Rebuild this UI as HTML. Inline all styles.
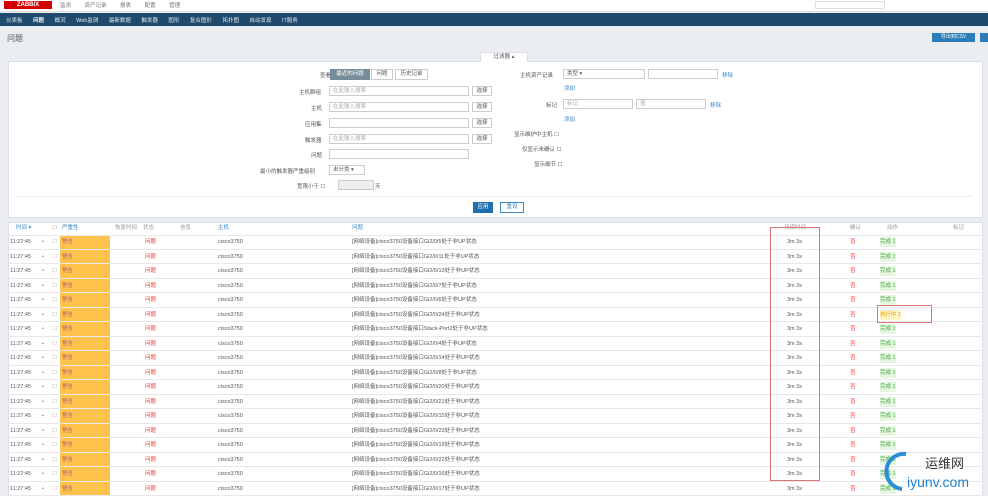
<!DOCTYPE html>
<html><head><meta charset="utf-8"><style>
*{margin:0;padding:0;box-sizing:border-box}
body{width:988px;height:496px;overflow:hidden;background:#ebeef0;font-family:"Liberation Sans","Noto Sans CJK SC",sans-serif;font-size:5.5px;color:#555;position:relative}
.a{position:absolute;white-space:nowrap}
.in{position:absolute;background:#fff;border:1px solid #ccc;height:10px;color:#aaa;padding-left:3px;line-height:8px}
.btn{position:absolute;background:#fff;border:1px solid #ccc;height:10px;text-align:center;line-height:8px;color:#555}
.row{position:absolute;left:8px;width:975px;height:14.5px;border-bottom:1px solid #e8e8e8}
.row span{position:absolute;top:0;line-height:14.5px;height:14.5px}
</style></head><body>
<div class="a" style="left:0;top:0;width:988px;height:12px;background:#fff;border-bottom:1px solid #ddd"></div>
<div class="a" style="left:4px;top:1px;width:48px;height:8px;background:#d40000;color:#fff;font-size:6px;font-weight:bold;text-align:center;line-height:8px">ZABBIX</div>
<div class="a" style="left:60px;top:1px;color:#777;word-spacing:12px">监测 资产记录 报表 配置 管理</div>
<div class="a" style="left:815px;top:1px;width:70px;height:8px;border:1px solid #ddd;background:#fff"></div>
<div class="a" style="left:0;top:13px;width:988px;height:13px;background:#1f4a6e"></div>
<div class="a" style="left:6px;top:16px;color:#dfe8ef;word-spacing:9px">仪表板 <b style="color:#fff">问题</b> 概况 Web监测 最新数据 触发器 图形 复合图形 拓扑图 自动发现 IT服务</div>
<div class="a" style="left:7px;top:33px;font-size:8px;color:#555">问题</div>
<div class="a" style="left:932px;top:33px;width:43px;height:9px;background:#2d7dbb;color:#fff;font-size:5px;text-align:center;line-height:9px">导出到CSV</div>
<div class="a" style="left:980px;top:33px;width:8px;height:9px;background:#2d7dbb"></div>
<div class="a" style="left:8px;top:61px;width:975px;height:157px;background:#fff;border:1px solid #dde"></div>
<div class="a" style="left:480px;top:52px;width:48px;height:10px;background:#fff;border:1px solid #dde;border-bottom:none;text-align:center;line-height:9px">过滤器 ▴</div>
<div class="a" style="left:320px;top:71px">查看</div>
<div class="a" style="left:330px;top:69px;width:40px;height:11px;background:#768d99;color:#fff;text-align:center;line-height:11px">最近的问题</div>
<div class="btn" style="left:371px;top:69px;width:22px;height:11px">问题</div>
<div class="btn" style="left:395px;top:69px;width:33px;height:11px">历史记录</div>
<div class="a" style="left:299px;top:88px">主机群组</div><div class="in" style="left:329px;top:86px;width:140px">在此输入搜索</div><div class="btn" style="left:472px;top:86px;width:20px">选择</div>
<div class="a" style="left:311px;top:104px">主机</div><div class="in" style="left:329px;top:102px;width:140px">在此输入搜索</div><div class="btn" style="left:472px;top:102px;width:20px">选择</div>
<div class="a" style="left:305px;top:120px">应用集</div><div class="in" style="left:329px;top:118px;width:140px"></div><div class="btn" style="left:472px;top:118px;width:20px">选择</div>
<div class="a" style="left:305px;top:136px">触发器</div><div class="in" style="left:329px;top:134px;width:140px">在此输入搜索</div><div class="btn" style="left:472px;top:134px;width:20px">选择</div>
<div class="a" style="left:311px;top:151px">问题</div><div class="in" style="left:329px;top:149px;width:140px"></div>
<div class="a" style="left:260px;top:167px">最小的触发器严重级别</div><div class="in" style="left:329px;top:165px;width:36px;color:#555">未分类 ▾</div>
<div class="a" style="left:297px;top:182px">宽限小于 ☐</div><div class="in" style="left:338px;top:180px;width:36px;background:#eee"></div><div class="a" style="left:375px;top:182px">天</div>
<div class="a" style="left:520px;top:71px">主机资产记录</div><div class="in" style="left:563px;top:69px;width:82px;color:#555">类型 ▾</div><div class="in" style="left:648px;top:69px;width:70px"></div><div class="a" style="left:722px;top:71px;color:#3b86c5">移除</div>
<div class="a" style="left:564px;top:84px;color:#3b86c5">添加</div>
<div class="a" style="left:546px;top:101px">标记</div><div class="in" style="left:563px;top:99px;width:70px">标记</div><div class="in" style="left:636px;top:99px;width:70px">值</div><div class="a" style="left:710px;top:101px;color:#3b86c5">移除</div>
<div class="a" style="left:564px;top:115px;color:#3b86c5">添加</div>
<div class="a" style="left:514px;top:130px">显示维护中主机 ☐</div>
<div class="a" style="left:522px;top:145px">仅显示未确认 ☐</div>
<div class="a" style="left:534px;top:160px">显示细节 ☐</div>
<div class="a" style="left:18px;top:196px;width:955px;border-top:1px solid #eee"></div>
<div class="a" style="left:473px;top:202px;width:20px;height:11px;background:#1f6eae;color:#fff;text-align:center;line-height:11px">应用</div>
<div class="btn" style="left:500px;top:202px;width:24px;height:11px;border-color:#3b86c5;color:#3b86c5">重设</div>
<div class="a" style="left:8px;top:222px;width:975px;height:274px;background:#fff;border:1px solid #dde"></div>
<div class="row" style="top:221px;color:#3b86c5">
<span style="left:8px">时间 ▾</span><span style="left:44px;color:#999">☐</span><span style="left:54px">严重性</span><span style="left:107px;color:#999">恢复时间</span><span style="left:135px;color:#999">状态</span><span style="left:172px;color:#999">信息</span><span style="left:210px">主机</span><span style="left:344px">问题</span><span style="left:776px;color:#999">持续时间</span><span style="left:842px;color:#999">确认</span><span style="left:879px;color:#999">动作</span><span style="left:945px;color:#999">标记</span></div>
<div class="a" style="left:60px;top:236px;width:50px;height:260px;background:#ffc24d"></div>
<div id="rows"></div>
<div class="a" style="left:770px;top:227px;width:50px;height:254px;border:1px solid #d77"></div>
<div class="a" style="left:877px;top:305px;width:55px;height:18px;border:1px solid #d77"></div>
<svg class="a" style="left:880px;top:445px" width="108" height="51"><path d="M26 9 A17 17 0 1 0 22 44" stroke="#2a8fd6" stroke-width="4" fill="none"/><text x="45" y="23" font-size="13" fill="#333" font-family="Noto Sans CJK SC,sans-serif">运维网</text><text x="27" y="42" font-size="14" fill="#1f7fc8" font-family="Liberation Sans,sans-serif">iyunv.com</text></svg>
<script>
var p=["Gi2/0/5","Gi2/0/11","Gi2/0/13","Gi2/0/7","Gi2/0/6","Gi2/0/24","Stack-Port2","Gi2/0/4","Gi2/0/14","Gi2/0/8","Gi2/0/20","Gi2/0/21","Gi2/0/15","Gi2/0/23","Gi2/0/19","Gi2/0/22","Gi2/0/16","Gi2/0/17"];
var h="";for(var i=0;i<18;i++){var t=235+i*14.5;var act=i==5?'<span style="left:872px;color:#e8a200;background:#fff3c8;height:10px;top:2px;line-height:10px">执行中 1</span>':'<span style="left:872px;color:#4a4;background:#e6f6e0;height:10px;top:2px;line-height:10px">完成 1</span>';
h+='<div class="row" style="top:'+t+'px"><span style="left:2px">11:27:45</span><span style="left:34px;color:#3b86c5">•</span><span style="left:44px;color:#aaa">☐</span><span style="left:54px;color:#a66">警告</span><span style="left:137px;color:#e33">问题</span><span style="left:210px">cisco3750</span><span style="left:344px">[网络设备]cisco3750设备接口'+p[i]+'处于非UP状态</span><span style="left:779px">3m 3s</span><span style="left:842px;color:#e33">否</span>'+act+'</div>';}
document.getElementById("rows").outerHTML=h;
</script>
</body></html>
